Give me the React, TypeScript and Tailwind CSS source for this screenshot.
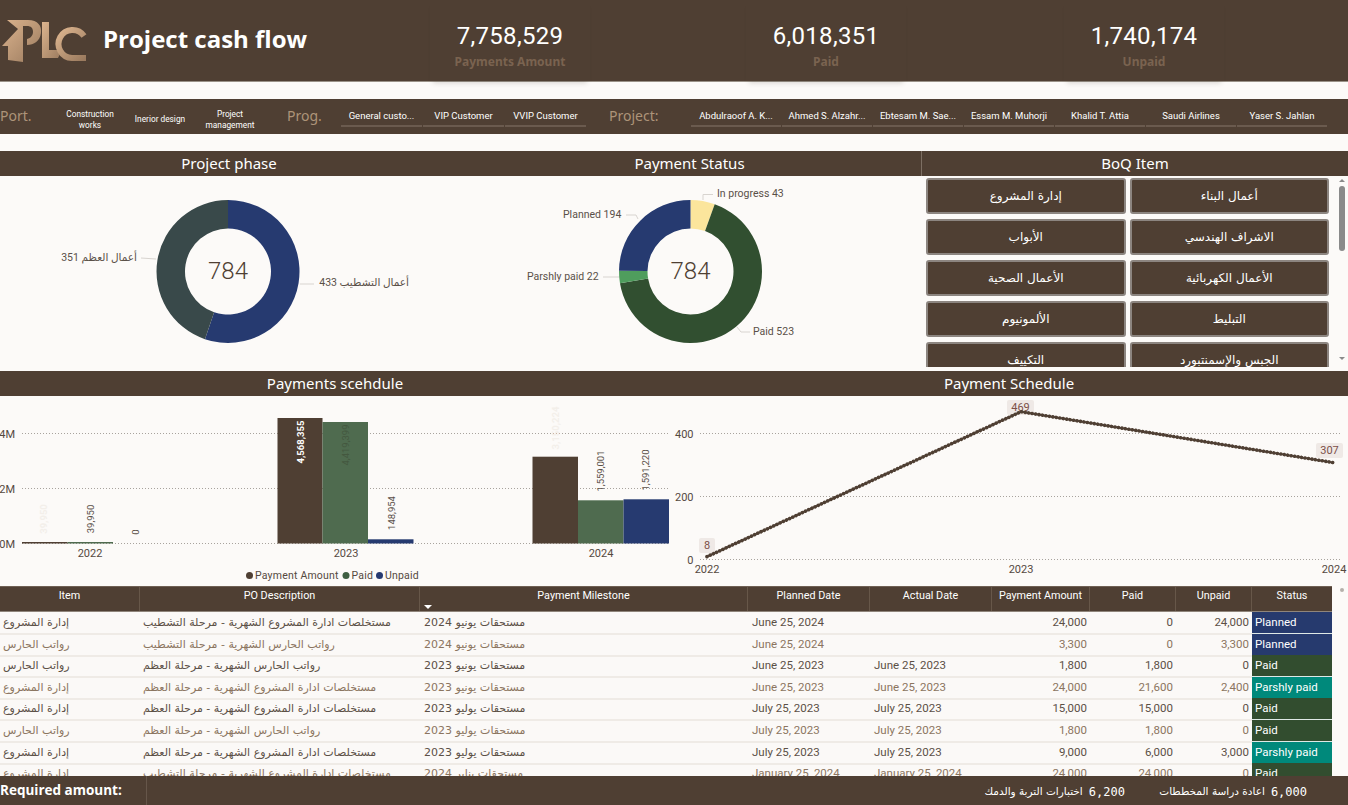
const brown = '#4f3f33';

const portfolios = ['Construction works', 'Inerior design', 'Project management'];
const programs = ['General custo...', 'VIP Customer', 'VVIP Customer'];
const projects = ['Abdulraoof A. K...', 'Ahmed S. Alzahr...', 'Ebtesam M. Sae...', 'Essam M. Muhorji', 'Khalid T. Attia', 'Saudi Airlines', 'Yaser S. Jahlan'];

const boqItems = [
    ['أعمال البناء', 'إدارة المشروع'],
    ['الاشراف الهندسي', 'الأبواب'],
    ['الأعمال الكهربائية', 'الأعمال الصحية'],
    ['التبليط', 'الألمونيوم'],
    ['الجبس والإسمنتبورد', 'التكييف'],
];

const statusClass: Record<string, string> = {
    Planned: 'bg-[#263a6e]',
    Paid: 'bg-[#324d2f]',
    'Parshly paid': 'bg-[#00897b]',
};

const rows = [
    ['إدارة المشروع', 'مستخلصات ادارة المشروع الشهرية - مرحلة التشطيب', 'مستحقات يونيو 2024', 'June 25, 2024', '', '24,000', '0', '24,000', 'Planned'],
    ['رواتب الحارس', 'رواتب الحارس الشهرية - مرحلة التشطيب', 'مستحقات يونيو 2024', 'June 25, 2024', '', '3,300', '0', '3,300', 'Planned'],
    ['رواتب الحارس', 'رواتب الحارس الشهرية - مرحلة العظم', 'مستحقات يونيو 2023', 'June 25, 2023', 'June 25, 2023', '1,800', '1,800', '0', 'Paid'],
    ['إدارة المشروع', 'مستخلصات ادارة المشروع الشهرية - مرحلة العظم', 'مستحقات يونيو 2023', 'June 25, 2023', 'June 25, 2023', '24,000', '21,600', '2,400', 'Parshly paid'],
    ['إدارة المشروع', 'مستخلصات ادارة المشروع الشهرية - مرحلة العظم', 'مستحقات يوليو 2023', 'July 25, 2023', 'July 25, 2023', '15,000', '15,000', '0', 'Paid'],
    ['رواتب الحارس', 'رواتب الحارس الشهرية - مرحلة العظم', 'مستحقات يوليو 2023', 'July 25, 2023', 'July 25, 2023', '1,800', '1,800', '0', 'Paid'],
    ['إدارة المشروع', 'مستخلصات ادارة المشروع الشهرية - مرحلة العظم', 'مستحقات يوليو 2023', 'July 25, 2023', 'July 25, 2023', '9,000', '6,000', '3,000', 'Parshly paid'],
    ['إدارة المشروع', 'مستخلصات ادارة المشروع الشهرية - مرحلة التشطيب', 'مستحقات يناير 2024', 'January 25, 2024', 'January 25, 2024', '24,000', '24,000', '0', 'Paid'],
];

const tableCols = 'grid grid-cols-[140px_280px_328px_122px_122px_98px_86px_76px_80px]';

const Logo = () => (
    <svg viewBox="0 14 90 52" className="w-[90px] h-[52px] shrink-0">
        <defs>
            <linearGradient id="plc" x1="0" y1="0" x2="1" y2="1">
                <stop offset="0" stopColor="#dcb48e" />
                <stop offset="1" stopColor="#9a7a5e" />
            </linearGradient>
        </defs>
        <path d="M7 20 H28 C38 20 42 26 41 33 C40 41 34 45 27 45 V39 C31 38 33 35 33 32 C33 28 31 26 27 26 H23 V62 L8 60 V46 H2 L18 29 Z" fill="url(#plc)" />
        <path d="M42 22 H49 V50 H62 L58 58 H42 Z" fill="url(#plc)" />
        <path d="M84 36 A14 14 0 1 0 72 58 H86" fill="none" stroke="url(#plc)" strokeWidth="6" />
    </svg>
);

const Kpi = ({ value, label, className }: { value: string; label: string; className: string }) => (
    <div className={`w-[160px] h-[81px] flex flex-col items-center pt-[21px] shadow-[0_5px_5px_-3px_rgba(60,50,40,0.18)] ${className}`}>
        <div className="font-['Roboto',sans-serif] text-[24px] leading-[30px] tracking-[0.3px] text-white">{value}</div>
        <div className="font-['Noto_Sans',sans-serif] font-bold text-[12px] leading-[18px] mt-[2px] text-[#7a6350]">{label}</div>
    </div>
);

const Slicer = ({ label }: { label: string }) => (
    <div className="mr-[1px] h-[18px] border-b-2 border-[#6a5a4e] flex items-start justify-center text-[9.5px] leading-[14px] text-white whitespace-nowrap overflow-hidden">
        {label}
    </div>
);

const SectionTitle = ({ children }: { children: string }) => (
    <div className="flex items-center justify-center text-white font-['Noto_Sans',sans-serif] text-[15px]">{children}</div>
);

const polar = (cx: number, cy: number, r: number, turn: number) => {
    const a = turn * Math.PI * 2;
    return `${(cx + r * Math.sin(a)).toFixed(2)} ${(cy - r * Math.cos(a)).toFixed(2)}`;
};

const Donut = ({ cx, cy, segments }: { cx: number; cy: number; segments: { value: number; color: string }[] }) => {
    const total = segments.reduce((s, x) => s + x.value, 0);
    let acc = 0;
    return (
        <g>
            {segments.map((seg) => {
                const from = acc / total;
                acc += seg.value;
                const to = acc / total;
                const large = to - from > 0.5 ? 1 : 0;
                return (
                    <path
                        key={seg.color}
                        d={`M${polar(cx, cy, 71.5, from)} A71.5 71.5 0 ${large} 1 ${polar(cx, cy, 71.5, to)} L${polar(cx, cy, 43, to)} A43 43 0 ${large} 0 ${polar(cx, cy, 43, from)} Z`}
                        fill={seg.color}
                    />
                );
            })}
            <text x={cx} y={cy + 7} textAnchor="middle" fontSize="24" fill={brown} fontFamily="Roboto, sans-serif" fontWeight="300">784</text>
        </g>
    );
};

const donutLabel = { fontSize: 10.5, fill: '#5a5048', fontFamily: 'Roboto, DejaVu Sans, sans-serif' };

const ProjectPhase = () => (
    <svg viewBox="0 176 458 195" className="w-[458px] h-[195px]">
        <Donut cx={228} cy={271.5} segments={[{ value: 433, color: '#263a70' }, { value: 351, color: '#39494a' }]} />
        <path d="M141 258 L156 259 M300 284 L314 284" stroke="#d8d4d0" fill="none" />
        <text x={137} y={261} direction="rtl" {...donutLabel}>أعمال العظم 351</text>
        <text x={409} y={286} direction="rtl" {...donutLabel}>أعمال التشطيب 433</text>
    </svg>
);

const PaymentStatus = () => (
    <svg viewBox="458 176 463 195" className="w-[463px] h-[195px]">
        <Donut
            cx={690.5}
            cy={271.5}
            segments={[
                { value: 43, color: '#fbe59c' },
                { value: 523, color: '#314f30' },
                { value: 22, color: '#4f9d5d' },
                { value: 194, color: '#263a70' },
            ]}
        />
        <path d="M703 200 L703 194.5 L713 194.5 M626 215 L636 215 L638 219 M603 277 L619 277 M737 327 L741 332 L750 332" stroke="#d8d4d0" fill="none" />
        <text x={717} y={197} {...donutLabel}>In progress 43</text>
        <text x={563} y={218} {...donutLabel}>Planned 194</text>
        <text x={527} y={280} {...donutLabel}>Parshly paid 22</text>
        <text x={753} y={335} {...donutLabel}>Paid 523</text>
    </svg>
);

const axisText = { fontSize: 11, fill: '#55493f', fontFamily: 'Roboto, sans-serif' };

const BarLabel = ({ x, y, text, fill = '#5a5048', bold = false }: { x: number; y: number; text: string; fill?: string; bold?: boolean }) => (
    <text
        transform={`translate(${x} ${y}) rotate(-90)`}
        textAnchor="middle"
        fontSize="9.5"
        fill={fill}
        fontWeight={bold ? 700 : 400}
        fontFamily="Roboto, sans-serif"
    >
        {text}
    </text>
);

const bars = [
    { x: 22, w: 45.5, top: 542, color: brown },
    { x: 67.5, w: 45.5, top: 542, color: '#4f6b4f' },
    { x: 277.5, w: 45, top: 418, color: brown },
    { x: 322.5, w: 45.5, top: 422, color: '#4f6b4f' },
    { x: 368, w: 45.5, top: 539.3, color: '#263a70' },
    { x: 532.5, w: 45.5, top: 456.7, color: brown },
    { x: 578, w: 45.5, top: 500.3, color: '#4f6b4f' },
    { x: 623.5, w: 45.5, top: 499.3, color: '#263a70' },
];

const BarChart = () => (
    <svg viewBox="0 396 670 190" className="w-[670px] h-[190px]">
        {[{ y: 433.5, t: '4M' }, { y: 488.5, t: '2M' }, { y: 543.5, t: '0M' }].map((g) => (
            <g key={g.t}>
                <line x1="22" x2="668" y1={g.y} y2={g.y} stroke="#a8a39d" strokeDasharray="1 2" />
                <text x="15" y={g.y + 4} textAnchor="end" {...axisText}>{g.t}</text>
            </g>
        ))}
        {bars.map((b) => (
            <rect key={b.x} x={b.x} y={b.top} width={b.w} height={543.5 - b.top} fill={b.color} />
        ))}
        <BarLabel x={47} y={519} text="39,950" fill="#f3efea" bold />
        <BarLabel x={93.5} y={519} text="39,950" />
        <BarLabel x={139} y={532} text="0" />
        <BarLabel x={304} y={442} text="4,568,355" fill="#ffffff" bold />
        <BarLabel x={349} y={445} text="4,419,399" fill="#44583f" />
        <BarLabel x={395} y={513} text="148,954" />
        <BarLabel x={559} y={428} text="3,150,224" fill="#f3efea" bold />
        <BarLabel x={604} y={471} text="1,559,001" />
        <BarLabel x={649} y={470} text="1,591,220" />
        {[{ x: 90, t: '2022' }, { x: 346, t: '2023' }, { x: 601, t: '2024' }].map((l) => (
            <text key={l.t} x={l.x} y={557} textAnchor="middle" {...axisText}>{l.t}</text>
        ))}
        <circle cx="249.5" cy="575.5" r="3.5" fill={brown} />
        <text x="255" y="579" {...axisText} fontSize="10.5" letterSpacing="0.2">Payment Amount</text>
        <circle cx="346" cy="575.5" r="3.5" fill="#3f5f42" />
        <text x="351.5" y="579" {...axisText} fontSize="10.5" letterSpacing="0.2">Paid</text>
        <circle cx="379.5" cy="575.5" r="3.5" fill="#263a70" />
        <text x="385" y="579" {...axisText} fontSize="10.5" letterSpacing="0.2">Unpaid</text>
    </svg>
);

const pointLabels = [
    { x: 699, y: 538, w: 16, h: 15, t: '8' },
    { x: 1007, y: 400, w: 27, h: 15, t: '469' },
    { x: 1316, y: 443, w: 27, h: 15, t: '307' },
];

const LineChart = () => (
    <svg viewBox="670 396 678 190" className="w-[678px] h-[190px]">
        {[{ y: 433.5, t: '400' }, { y: 496.5, t: '200' }, { y: 559.5, t: '0' }].map((g) => (
            <g key={g.t}>
                <line x1="700" x2="1340" y1={g.y} y2={g.y} stroke="#a8a39d" strokeDasharray="1 2" />
                <text x="693.5" y={g.y + 4} textAnchor="end" {...axisText}>{g.t}</text>
            </g>
        ))}
        {pointLabels.map((p) => (
            <g key={p.t}>
                <rect x={p.x} y={p.y} width={p.w} height={p.h} rx="2" fill="#efe9e6" />
                <text x={p.x + p.w / 2} y={p.y + 11} textAnchor="middle" fontSize="11" fill="#7c5048" fontFamily="Roboto, sans-serif">{p.t}</text>
            </g>
        ))}
        <polyline points="707,556.7 1021,411.7 1334,462.7" fill="none" stroke={brown} strokeWidth="1.6" />
        <polyline points="707,556.7 1021,411.7 1334,462.7" fill="none" stroke={brown} strokeWidth="3.6" strokeLinecap="round" strokeDasharray="0.1 3.4" />
        {[{ x: 707, t: '2022' }, { x: 1021, t: '2023' }, { x: 1334, t: '2024' }].map((l) => (
            <text key={l.t} x={l.x} y={573} textAnchor="middle" {...axisText}>{l.t}</text>
        ))}
    </svg>
);

const headers = ['Item', 'PO Description', 'Payment Milestone', 'Planned Date', 'Actual Date', 'Payment Amount', 'Paid', 'Unpaid', 'Status'];

const Table = () => (
    <div className="w-[1332px] h-[190px] overflow-hidden font-['Roboto',sans-serif]">
        <div className={`${tableCols} h-[26px] bg-[#4f3f33] border-t border-[#6f6054] border-b border-b-[#8f857b] text-white text-[10.8px] leading-[18px]`}>
            {headers.map((h, i) => (
                <div key={h} className={`relative text-center ${i < 8 ? 'border-r border-[#675749]' : ''}`}>
                    {h}
                    {i === 2 && <span className="absolute left-[4px] top-[18px] w-0 h-0 border-x-[4px] border-x-transparent border-t-[4px] border-t-white" />}
                </div>
            ))}
        </div>
        {rows.map((row, r) => (
            <div key={r} className={`${tableCols} h-[21.6px] bg-[#fbf9f7] text-[11.5px] leading-[21px] ${r % 2 ? 'text-[#8b7560]' : 'text-[#5c5046]'}`}>
                <div className="border-b-2 border-[#efebe6] pl-[3px] font-['DejaVu_Sans',sans-serif] text-[11px]"><span dir="rtl" className="inline-block">{row[0]}</span></div>
                <div className="border-b-2 border-[#efebe6] pl-[3px] font-['DejaVu_Sans',sans-serif] text-[11px]"><span dir="rtl" className="inline-block whitespace-nowrap">{row[1]}</span></div>
                <div className="border-b-2 border-[#efebe6] pl-[4px] font-['DejaVu_Sans',sans-serif] text-[11px]"><span dir="rtl" className="inline-block whitespace-nowrap">{row[2]}</span></div>
                <div className="border-b-2 border-[#efebe6] pl-[4px]">{row[3]}</div>
                <div className="border-b-2 border-[#efebe6] pl-[4px]">{row[4]}</div>
                <div className="border-b-2 border-[#efebe6] pr-[3px] text-right">{row[5]}</div>
                <div className="border-b-2 border-[#efebe6] pr-[3px] text-right">{row[6]}</div>
                <div className="border-b-2 border-[#efebe6] pr-[3px] text-right">{row[7]}</div>
                <div className={`border-b-2 border-[#dfe9e6] pl-[3px] text-white ${statusClass[row[8]]}`}>{row[8]}</div>
            </div>
        ))}
    </div>
);

const App = () => {
    return (
        <div className="w-[1348px] h-[805px] overflow-hidden bg-[#fcfaf8] flex flex-col font-['Roboto',sans-serif]">
            <header className="h-[82px] shrink-0 bg-[#4f3f33] border-b border-[#9a9288] flex">
                <div className="w-[430px] flex items-start pt-[14px]">
                    <Logo />
                    <h1 className="ml-[13px] mt-[6px] font-['Open_Sans',sans-serif] font-bold text-[24px] leading-[38px] text-white whitespace-nowrap">Project cash flow</h1>
                </div>
                <Kpi value="7,758,529" label="Payments Amount" className="" />
                <Kpi value="6,018,351" label="Paid" className="ml-[156px]" />
                <Kpi value="1,740,174" label="Unpaid" className="ml-[158px]" />
            </header>

            <div className="mt-[17px] h-[35px] shrink-0 bg-[#4f3f33] flex items-center">
                <span className="w-[55px] pb-[3px] font-['Noto_Sans',sans-serif] text-[14px] text-[#ad9479]">Port.</span>
                {portfolios.map((p) => (
                    <div key={p} className="w-[70px] mt-[6px] px-[8px] text-center text-[8.3px] leading-[11px] text-white">
                        {p}
                    </div>
                ))}
                <span className="ml-[22px] w-[54px] pb-[3px] font-['Noto_Sans',sans-serif] text-[14px] text-[#ad9479]">Prog.</span>
                <div className="flex pt-[3px]">
                    {programs.map((p) => <div key={p} className="w-[82px]"><Slicer label={p} /></div>)}
                </div>
                <span className="ml-[22px] w-[82px] pb-[3px] font-['Noto_Sans',sans-serif] text-[14px] text-[#ad9479]">Project:</span>
                <div className="flex pt-[3px]">
                    {projects.map((p) => <div key={p} className="w-[91px]"><Slicer label={p} /></div>)}
                </div>
            </div>

            <div className="mt-[17px] h-[25px] shrink-0 bg-[#4f3f33] grid grid-cols-[458px_463px_427px]">
                <SectionTitle>Project phase</SectionTitle>
                <SectionTitle>Payment Status</SectionTitle>
                <div className="border-l border-[#7d6f63] flex items-center justify-center text-white font-['Noto_Sans',sans-serif] text-[15px]">BoQ Item</div>
            </div>

            <div className="h-[195px] shrink-0 grid grid-cols-[458px_463px_427px]">
                <ProjectPhase />
                <PaymentStatus />
                <div className="flex pt-[2px] pl-[5px]">
                    <div dir="rtl" className="w-[403px] h-[189px] overflow-hidden grid grid-cols-2 gap-x-[4px] gap-y-[5px] content-start">
                        {boqItems.flat().map((item) => (
                            <div key={item} className="h-[36px] rounded-[3px] border-2 border-[#8c8580] bg-[#4f3f33] flex items-center justify-center text-white font-['DejaVu_Sans',sans-serif] text-[12px]">
                                {item}
                            </div>
                        ))}
                    </div>
                    <div className="ml-[9px] w-[7px] h-[189px] flex flex-col items-center">
                        <span className="mt-[1px] w-0 h-0 border-x-[3px] border-x-transparent border-b-[3px] border-b-[#8a8a8a]" />
                        <div className="mt-[4px] w-[6px] h-[65px] rounded-[3px] bg-[#8a8a8a]" />
                        <span className="mt-auto mb-[7px] w-0 h-0 border-x-[3px] border-x-transparent border-t-[3px] border-t-[#8a8a8a]" />
                    </div>
                </div>
            </div>

            <div className="h-[25px] shrink-0 bg-[#4f3f33] grid grid-cols-[670px_678px]">
                <SectionTitle>Payments scehdule</SectionTitle>
                <SectionTitle>Payment Schedule</SectionTitle>
            </div>

            <div className="h-[190px] shrink-0 flex">
                <BarChart />
                <LineChart />
            </div>

            <div className="relative">
                <Table />
                <span className="absolute left-[1340px] top-[2px] w-[4px] h-[4px] rounded-full bg-[#b5b0ab]" />
            </div>

            <footer className="h-[29px] shrink-0 bg-[#4f3f33] flex items-center text-white">
                <div className="w-[147px] h-full border-r border-[#66564a] font-['Open_Sans',sans-serif] font-bold text-[13.5px] leading-[28px] whitespace-nowrap">Required amount:</div>
                <div className="ml-auto mr-[41px] flex items-center pt-[2px]">
                    <span dir="rtl" className="w-[98px] font-['DejaVu_Sans',sans-serif] text-[10.5px] text-center whitespace-nowrap">اختبارات التربة والدمك</span>
                    <span className="ml-[6px] font-['DejaVu_Sans_Mono',monospace] text-[12px]">6,200</span>
                    <span dir="rtl" className="ml-[42px] w-[98px] font-['DejaVu_Sans',sans-serif] text-[10.5px] text-center whitespace-nowrap">اعادة دراسة المخططات</span>
                    <span className="ml-[6px] font-['DejaVu_Sans_Mono',monospace] text-[12px]">6,000</span>
                </div>
            </footer>
        </div>
    );
};

export default App;
